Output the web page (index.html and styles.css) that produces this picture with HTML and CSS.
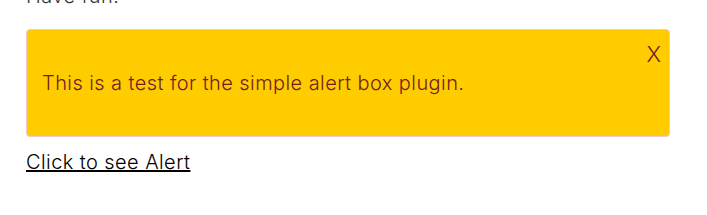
FILE: index.html
```html
<!DOCTYPE html>
<html lang="en">
<head>
<meta charset="utf-8">
<title>Alert</title>
<link rel="stylesheet" href="styles.css">
</head>
<body>
<div class="page">
  <p class="intro">Have fun.</p>
  <div class="alert">
    <span class="close">X</span>
    <p class="message">This is a test for the simple alert box plugin.</p>
  </div>
  <a class="trigger" href="#">Click to see Alert</a>
</div>
</body>
</html>
```
FILE: styles.css
```css
html, body {
  margin: 0;
  padding: 0;
  background: #ffffff;
}
.page {
  padding: 0 37px 0 26px;
  font-family: Inter, "Noto Sans", sans-serif;
  font-size: 20px;
  line-height: 30px;
  letter-spacing: 0.42px;
  color: #333333;
}
.intro {
  margin: -19px 0 18px 0;
  font-weight: 300;
}
.alert {
  position: relative;
  background: #ffcc00;
  border: 1px solid #f5c6cb;
  border-radius: 4px;
  color: #721c24;
  padding: 38px 15px;
  margin-bottom: 10px;
}
.message {
  margin: 0;
  font-weight: 300;
}
.close {
  position: absolute;
  top: 13px;
  right: 8px;
  font-size: 22px;
  line-height: 1;
  font-weight: 300;
  letter-spacing: 0;
}
.trigger {
  display: inline-block;
  color: #000000;
  text-decoration: underline;
  font-weight: 300;
}
```
